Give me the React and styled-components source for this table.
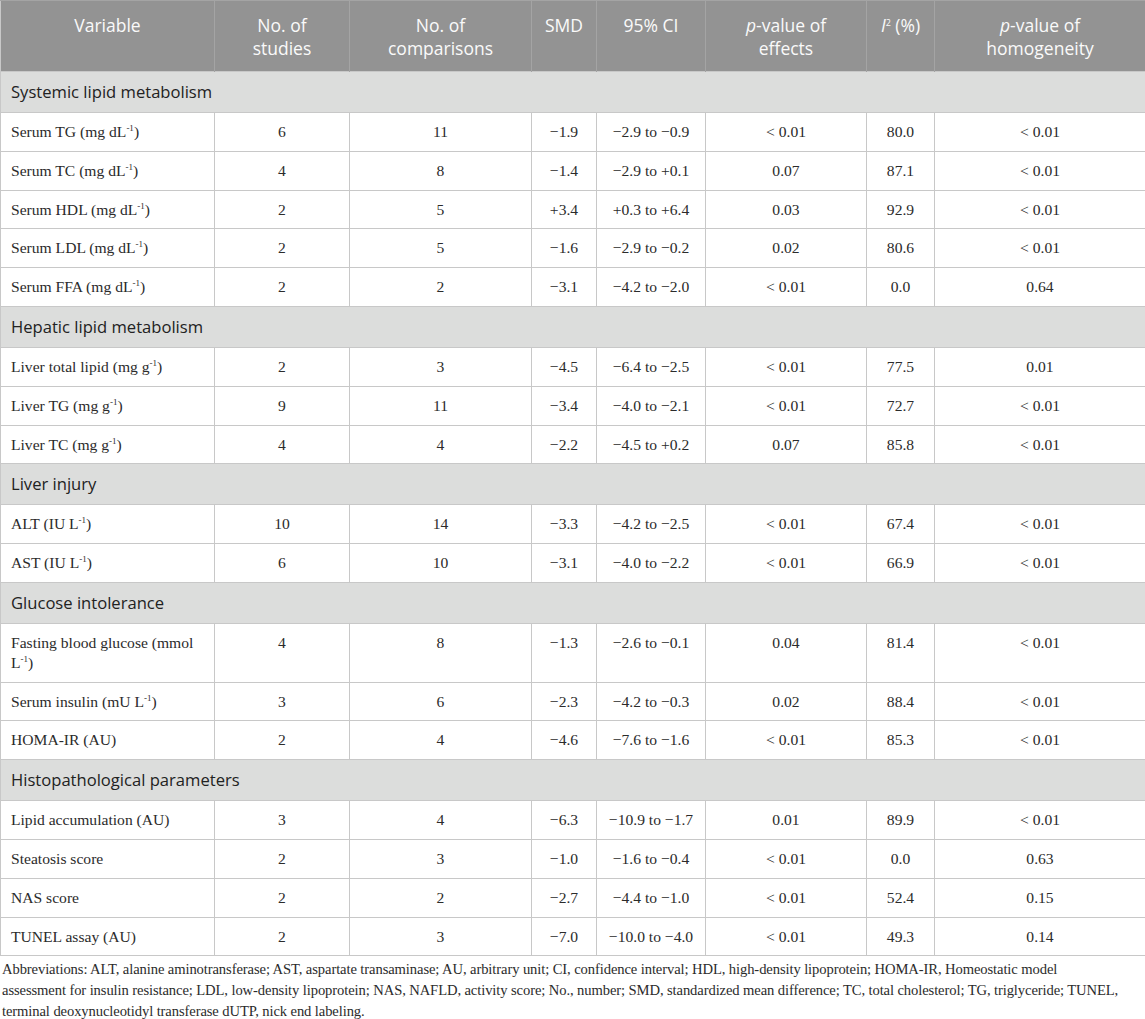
import React from 'react';
import styled, { createGlobalStyle } from 'styled-components';

const GlobalStyle = createGlobalStyle`
  html, body {
    margin: 0;
    padding: 0;
    background: #fff;
  }
`;

const Page = styled.div`
  width: 1145px;
`;

const Table = styled.table`
  width: 1145px;
  border-collapse: collapse;
  table-layout: fixed;
  border-left: 1px solid #c8c8c8;
  border-right: 1px solid #c8c8c8;
  border-bottom: 1px solid #c8c8c8;
`;

const HeadCell = styled.th`
  background: #939393;
  color: #fafafa;
  font-family: 'Open Sans', 'Noto Sans', sans-serif;
  font-weight: 400;
  font-size: 17.5px;
  line-height: 23px;
  text-align: center;
  vertical-align: top;
  padding: 13px 6px 11px;
  height: 46px;
  border-left: 1px solid #a4a4a4;
  border-top: 1px solid #a4a4a4;
  &:first-child {
    border-left: none;
  }
`;

const SectionCell = styled.td`
  background: #dcdddc;
  color: #222;
  font-family: 'Open Sans', 'Noto Sans', sans-serif;
  font-size: 16.6px;
  line-height: 22px;
  padding: 9px 10px 9px;
  border-top: 1px solid #c8c8c8;
`;

const Cell = styled.td`
  font-family: 'Liberation Serif', 'Times New Roman', serif;
  font-size: 15.6px;
  line-height: 19.8px;
  color: #2b2b2b;
  padding: 9px 10px 9px;
  text-align: ${(p) => (p.$left ? 'left' : 'center')};
  vertical-align: top;
  border: 1px solid #c8c8c8;
`;

const Sup = styled.sup`
  font-size: 9px;
  line-height: 0;
  vertical-align: 6px;
`;

const NoWrap = styled.span`
  white-space: nowrap;
`;

const Italic = styled.i`
  font-style: italic;
`;

const Footnote = styled.p`
  margin: 0;
  padding: 3px 2px 0 2px;
  font-family: 'Liberation Serif', 'Times New Roman', serif;
  font-size: 14.6px;
  letter-spacing: -0.1px;
  line-height: 21px;
  color: #2b2b2b;
  white-space: nowrap;
`;

const widths = [214, 135, 182, 65, 109, 161, 68, 211];

const Unit = ({ base, unit }) => (
  <>
    {base}
    <NoWrap>
      {unit}
      <Sup>-1</Sup>)
    </NoWrap>
  </>
);

const sections = [
  {
    title: 'Systemic lipid metabolism',
    rows: [
      [<Unit base="Serum TG (mg " unit="dL" />, '6', '11', '−1.9', '−2.9 to −0.9', '< 0.01', '80.0', '< 0.01'],
      [<Unit base="Serum TC (mg " unit="dL" />, '4', '8', '−1.4', '−2.9 to +0.1', '0.07', '87.1', '< 0.01'],
      [<Unit base="Serum HDL (mg " unit="dL" />, '2', '5', '+3.4', '+0.3 to +6.4', '0.03', '92.9', '< 0.01'],
      [<Unit base="Serum LDL (mg " unit="dL" />, '2', '5', '−1.6', '−2.9 to −0.2', '0.02', '80.6', '< 0.01'],
      [<Unit base="Serum FFA (mg " unit="dL" />, '2', '2', '−3.1', '−4.2 to −2.0', '< 0.01', '0.0', '0.64'],
    ],
  },
  {
    title: 'Hepatic lipid metabolism',
    rows: [
      [<Unit base="Liver total lipid (mg " unit="g" />, '2', '3', '−4.5', '−6.4 to −2.5', '< 0.01', '77.5', '0.01'],
      [<Unit base="Liver TG (mg " unit="g" />, '9', '11', '−3.4', '−4.0 to −2.1', '< 0.01', '72.7', '< 0.01'],
      [<Unit base="Liver TC (mg " unit="g" />, '4', '4', '−2.2', '−4.5 to +0.2', '0.07', '85.8', '< 0.01'],
    ],
  },
  {
    title: 'Liver injury',
    rows: [
      [<Unit base="ALT (IU " unit="L" />, '10', '14', '−3.3', '−4.2 to −2.5', '< 0.01', '67.4', '< 0.01'],
      [<Unit base="AST (IU " unit="L" />, '6', '10', '−3.1', '−4.0 to −2.2', '< 0.01', '66.9', '< 0.01'],
    ],
  },
  {
    title: 'Glucose intolerance',
    rows: [
      [<Unit base="Fasting blood glucose (mmol " unit="L" />, '4', '8', '−1.3', '−2.6 to −0.1', '0.04', '81.4', '< 0.01'],
      [<Unit base="Serum insulin (mU " unit="L" />, '3', '6', '−2.3', '−4.2 to −0.3', '0.02', '88.4', '< 0.01'],
      ['HOMA-IR (AU)', '2', '4', '−4.6', '−7.6 to −1.6', '< 0.01', '85.3', '< 0.01'],
    ],
  },
  {
    title: 'Histopathological parameters',
    rows: [
      ['Lipid accumulation (AU)', '3', '4', '−6.3', '−10.9 to −1.7', '0.01', '89.9', '< 0.01'],
      ['Steatosis score', '2', '3', '−1.0', '−1.6 to −0.4', '< 0.01', '0.0', '0.63'],
      ['NAS score', '2', '2', '−2.7', '−4.4 to −1.0', '< 0.01', '52.4', '0.15'],
      ['TUNEL assay (AU)', '2', '3', '−7.0', '−10.0 to −4.0', '< 0.01', '49.3', '0.14'],
    ],
  },
];

export default function App() {
  return (
    <Page>
      <GlobalStyle />
      <Table>
        <colgroup>
          {widths.map((w, i) => (
            <col key={i} style={{ width: w }} />
          ))}
        </colgroup>
        <thead>
          <tr>
            <HeadCell>Variable</HeadCell>
            <HeadCell>No. of<br />studies</HeadCell>
            <HeadCell>No. of<br />comparisons</HeadCell>
            <HeadCell>SMD</HeadCell>
            <HeadCell>95% CI</HeadCell>
            <HeadCell><Italic>p</Italic>-value of<br />effects</HeadCell>
            <HeadCell><Italic>I</Italic><Sup>2</Sup> (%)</HeadCell>
            <HeadCell><Italic>p</Italic>-value of<br />homogeneity</HeadCell>
          </tr>
        </thead>
        <tbody>
          {sections.map((s) => (
            <React.Fragment key={s.title}>
              <tr>
                <SectionCell colSpan={8}>{s.title}</SectionCell>
              </tr>
              {s.rows.map((r, i) => (
                <tr key={i}>
                  {r.map((c, j) => (
                    <Cell key={j} $left={j === 0}>{c}</Cell>
                  ))}
                </tr>
              ))}
            </React.Fragment>
          ))}
        </tbody>
      </Table>
      <Footnote>
        Abbreviations: ALT, alanine aminotransferase; AST, aspartate transaminase; AU, arbitrary unit; CI, confidence interval; HDL, high-density lipoprotein; HOMA-IR, Homeostatic model
        <br />
        assessment for insulin resistance; LDL, low-density lipoprotein; NAS, NAFLD, activity score; No., number; SMD, standardized mean difference; TC, total cholesterol; TG, triglyceride; TUNEL,
        <br />
        terminal deoxynucleotidyl transferase dUTP, nick end labeling.
      </Footnote>
    </Page>
  );
}
